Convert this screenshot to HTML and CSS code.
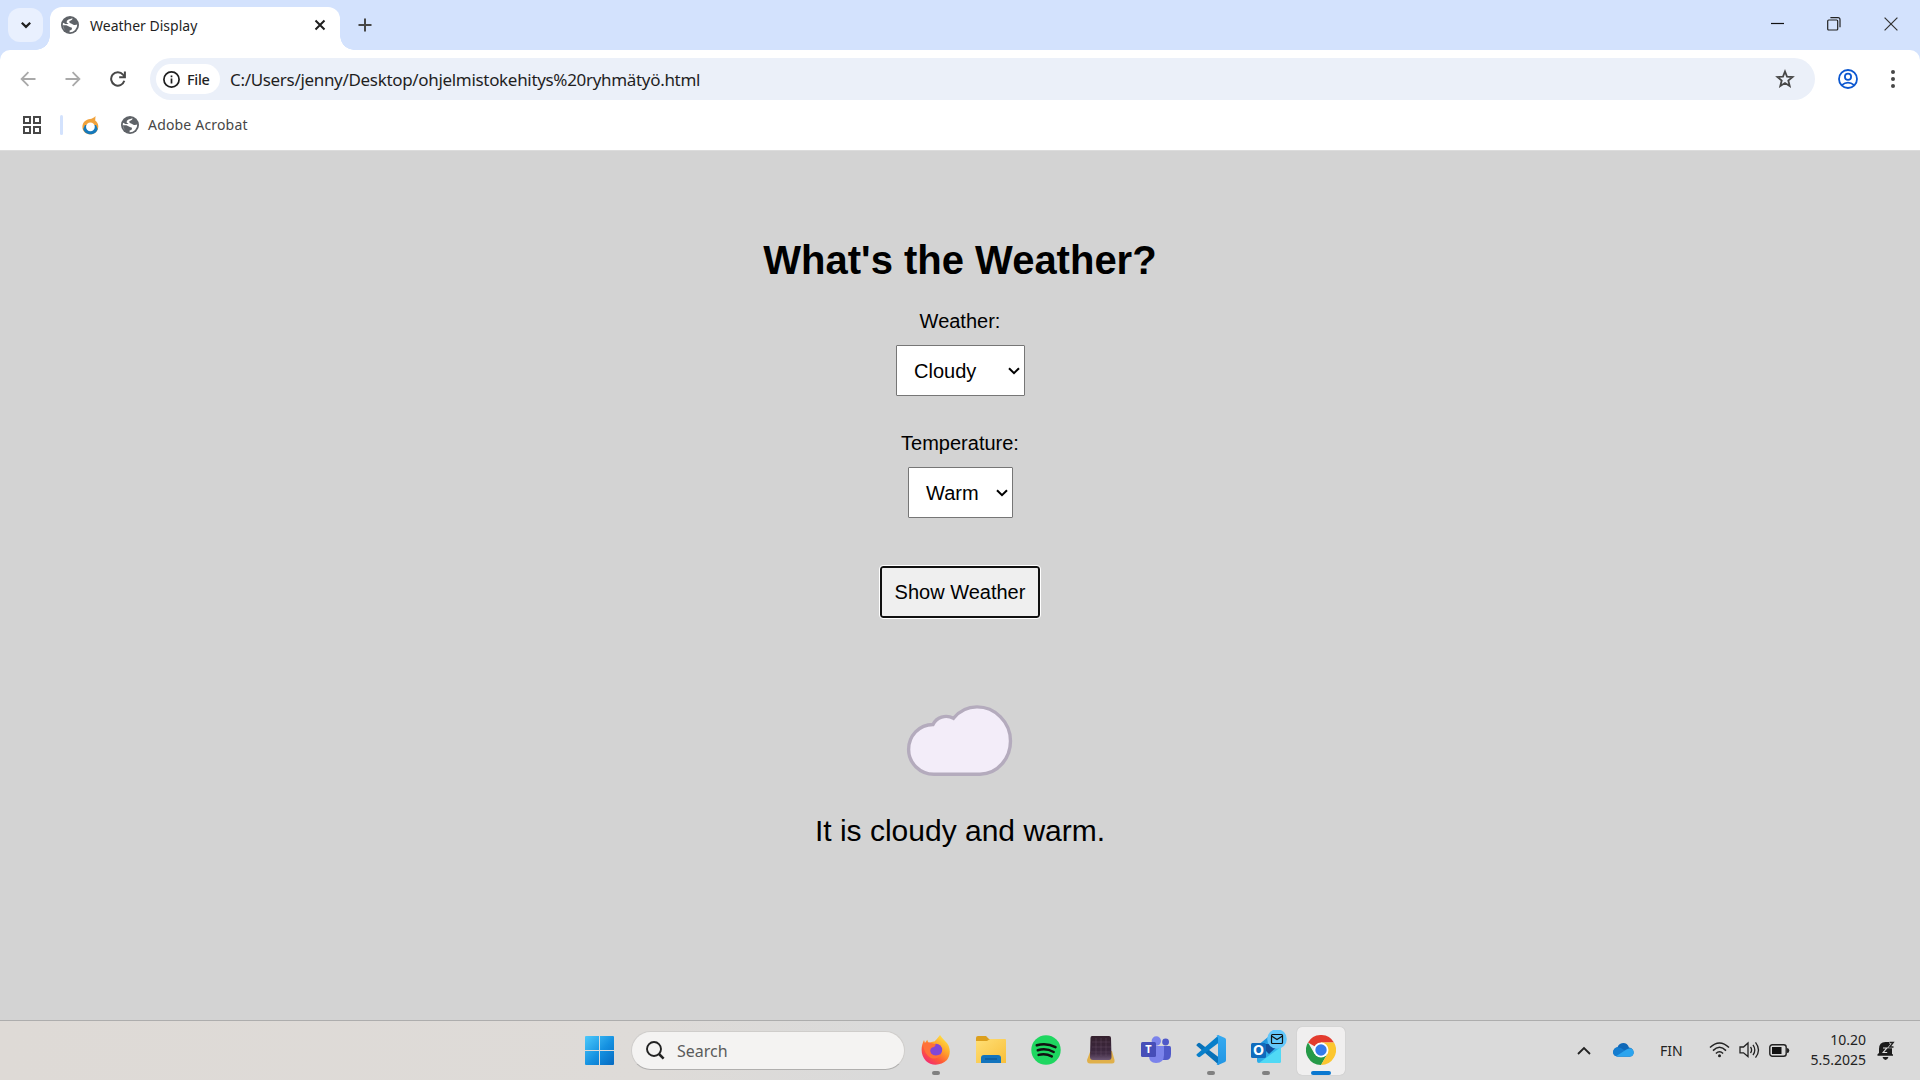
FILE: index.html
```html
<!DOCTYPE html>
<html lang="en">
<head>
<meta charset="utf-8">
<title>Weather Display</title>
<link rel="stylesheet" href="styles.css">
</head>
<body>
<svg width="0" height="0" class="defs" aria-hidden="true">
  <defs>
    <symbol id="globe" viewBox="0 0 18 18">
      <circle cx="9" cy="9" r="9" fill="#5f6368"/>
      <path d="M11.6 2.2Q11.5 4 9.7 4.6L8.2 5.4Q8 6.6 9.4 7.2L11.2 8Q12.3 9.3 14 9L16.2 8.5A7.3 7.3 0 0 1 8.6 16.2V14.6Q11 14.2 11 12.4 11 11.3 9.4 11.2L5.4 9.2H1.8A7.3 7.3 0 0 0 4.2 14.4Q2.5 12.5 1.8 9 1.7 7.8 2.2 6.8L4.4 8H7.6L5.6 6.6Q5.3 4.4 7.5 3.6L11.6 2.2Z" fill="#fff"/>
    </symbol>
    <linearGradient id="win" x1="0" y1="0" x2="1" y2="1"><stop offset="0" stop-color="#4cc9fb"/><stop offset=".55" stop-color="#1490e0"/><stop offset="1" stop-color="#0669c0"/></linearGradient>
    <linearGradient id="fox" x1=".9" y1="0" x2=".2" y2="1"><stop offset="0" stop-color="#fff14a"/><stop offset=".4" stop-color="#ffa62b"/><stop offset=".7" stop-color="#ff5a36"/><stop offset="1" stop-color="#f0247c"/></linearGradient>
    <linearGradient id="folder" x1="0" y1="0" x2="1" y2="1"><stop offset="0" stop-color="#ffdf76"/><stop offset="1" stop-color="#f8bf3a"/></linearGradient>
    <linearGradient id="keys" x1="0" y1="0" x2="0" y2="1"><stop offset="0" stop-color="#34202d"/><stop offset=".7" stop-color="#3d2840"/><stop offset="1" stop-color="#6d5774"/></linearGradient>
    <linearGradient id="code" x1="0" y1="0" x2="0" y2="1"><stop offset="0" stop-color="#36aaf0"/><stop offset="1" stop-color="#2196e4"/></linearGradient>
    <linearGradient id="mail" x1="0" y1="0" x2="1" y2="1"><stop offset="0" stop-color="#1784d8"/><stop offset="1" stop-color="#43d3f5"/></linearGradient>
  </defs>
</svg>

<header class="browser">
  <div class="tabstrip">
    <div class="tab-search"><svg width="12" height="8" viewBox="0 0 12 8"><path d="M1.8 1.7 6 5.9 10.2 1.7" fill="none" stroke="#1f1f1f" stroke-width="2.2"/></svg></div>
    <div class="tab">
      <svg class="tab-globe" width="18" height="18"><use href="#globe"/></svg>
      <span class="tab-title">Weather Display</span>
      <svg class="tab-close" width="12" height="12" viewBox="0 0 12 12"><path d="M1.5 1.5 10.5 10.5M10.5 1.5 1.5 10.5" stroke="#1f1f1f" stroke-width="2"/></svg>
    </div>
    <svg class="tab-new" width="14" height="14" viewBox="0 0 14 14"><path d="M7 .5V13.5M.5 7H13.5" stroke="#474747" stroke-width="2"/></svg>
    <div class="window-buttons">
      <svg width="14" height="14" viewBox="0 0 14 14"><path d="M1 6.5H14" stroke="#111" stroke-width="1.2"/></svg>
      <svg width="14" height="14" viewBox="0 0 14 14"><rect x=".7" y="3" width="10" height="10" rx="1" fill="none" stroke="#222" stroke-width="1.2"/><path d="M3.4.7H11Q13 .7 13 2.7V10.2" fill="none" stroke="#222" stroke-width="1.2"/></svg>
      <svg width="14" height="14" viewBox="0 0 14 14"><path d="M.6.6 13.4 13.4M13.4.6.6 13.4" stroke="#333" stroke-width="1.2"/></svg>
    </div>
  </div>

  <div class="toolbar">
    <nav class="nav-buttons">
      <svg width="16" height="16" viewBox="0 0 16 16"><path d="M15.5 8H1.8M8.4 1.2 1.6 8 8.4 14.8" fill="none" stroke="#a9a9a9" stroke-width="1.8"/></svg>
      <svg width="16" height="16" viewBox="0 0 16 16"><path d="M.5 8H14.2M7.6 1.2 14.4 8 7.6 14.8" fill="none" stroke="#a9a9a9" stroke-width="1.8"/></svg>
      <svg width="16" height="16" viewBox="0 0 16 16"><path d="M14.3 9.8A6.7 6.7 0 1 1 13 3.6L14.8 5.5M14.9.5V6.2H9.2" fill="none" stroke="#474747" stroke-width="2"/></svg>
    </nav>
    <div class="omnibox">
      <div class="chip">
        <svg width="17" height="17" viewBox="0 0 17 17"><circle cx="8.5" cy="8.5" r="7.6" fill="none" stroke="#1f1f1f" stroke-width="1.7"/><path d="M8.5 7.6V12.4M8.5 4.5V6.2" stroke="#1f1f1f" stroke-width="1.7"/></svg>
        <span class="chip-text">File</span>
      </div>
      <span class="url">C:/Users/jenny/Desktop/ohjelmistokehitys%20ryhmätyö.html</span>
      <svg class="star" width="20" height="20" viewBox="0 0 20 20"><path d="M10 2.5 12 7.6 17.6 8 13.3 11.6 14.7 17 10 14.1 5.3 17 6.7 11.6 2.4 8 8 7.6Z" fill="none" stroke="#474747" stroke-width="1.8"/></svg>
    </div>
    <svg class="profile" width="20" height="20" viewBox="0 0 20 20" fill="none" stroke="#0b57d0" stroke-width="1.8"><circle cx="10" cy="10" r="9"/><circle cx="10" cy="7.8" r="3.1"/><path d="M3.8 16.1Q10 11.3 16.2 16.1"/></svg>
    <svg class="menu" width="4" height="18" viewBox="0 0 4 18" fill="#474747"><circle cx="2" cy="2" r="2"/><circle cx="2" cy="9" r="2"/><circle cx="2" cy="16" r="2"/></svg>
  </div>

  <div class="bookmarks">
    <svg width="18" height="18" viewBox="0 0 18 18" fill="none" stroke="#474747" stroke-width="2"><path d="M1 1H7V7H1ZM11 1H17V7H11ZM1 11H7V17H1ZM11 11H17V17H11Z"/></svg>
    <span class="divider"></span>
    <svg class="drop" width="17" height="19" viewBox="0 0 17 19"><path d="M13.5 0 13.2 4.5C18 8 17 15 12 17.5 7 20 0 17 .4 10.5.6 6 4 3.5 8 3 10 2.8 12 1.8 13.5 0Z" fill="#f0a23c"/><path d="M1.2 13C3 20 14 20 15.7 13L14 9 3 9Z" fill="#1579bb"/><circle cx="8.4" cy="10.8" r="4.4" fill="#fff"/></svg>
    <svg class="bm-globe" width="18" height="18"><use href="#globe"/></svg>
    <span class="bm-text">Adobe Acrobat</span>
  </div>
</header>

<main class="page">
  <h1 class="title">What's the Weather?</h1>
  <div class="label">Weather:</div>
  <div class="select weather" role="combobox">Cloudy<svg width="12" height="8" viewBox="0 0 12 8"><path d="M1 1.2 6 6.2 11 1.2" fill="none" stroke="#000" stroke-width="2"/></svg></div>
  <div class="label second">Temperature:</div>
  <div class="select temperature" role="combobox">Warm<svg width="12" height="8" viewBox="0 0 12 8"><path d="M1 1.2 6 6.2 11 1.2" fill="none" stroke="#000" stroke-width="2"/></svg></div>
  <button class="show">Show Weather</button>
  <svg class="cloud" width="120" height="80" viewBox="0 0 120 80"><path d="M33 24.5C19 24.5 8.6 36 8.6 49.5S20 74.2 34 74.2H80C98 74.2 110.5 58 110.5 41 110.5 22 95 6.9 77 6.9 67 6.9 59 11.5 53.5 18.3 45.5 14 36.5 17.5 33 24.5Z" fill="#f3edf9" stroke="#b4abbd" stroke-width="3.4"/></svg>
  <p class="result">It is cloudy and warm.</p>
</main>

<footer class="taskbar">
  <svg class="start" width="29" height="29" viewBox="0 0 29 29" fill="url(#win)"><path d="M1 0H14V14H0V1Q0 0 1 0ZM15 0H28Q29 0 29 1V14H15ZM0 15H14V29H1Q0 29 0 28ZM15 15H29V28Q29 29 28 29H15Z"/></svg>
  <div class="search">
    <svg width="19" height="19" viewBox="0 0 19 19"><circle cx="8" cy="8" r="7" fill="none" stroke="#222" stroke-width="1.9"/><path d="M13 13 17.6 17.6" stroke="#222" stroke-width="2.5"/></svg>
    <span class="search-text">Search</span>
  </div>
  <div class="apps">
    <div class="app running">
      <svg width="30" height="30" viewBox="0 0 30 30"><path d="M19 0Q21 3 24 6C30 11 30 20 26 25 20 31 10 31 5 26-1 20 0 11 3 5L4 8 6.2 4.8 7.5 8Q12 6 13.5 6.5 16 4 19 0Z" fill="url(#fox)"/><circle cx="15" cy="15" r="6.2" fill="#8147d8"/><path d="M2 9Q6 6 10 8L15 9.5Q14 12 11 12.6 8 15 10 18.5 14 22 20 19 17 25 10 23 3 19 2 9Z" fill="#ff7139"/></svg>
    </div>
    <div class="app">
      <svg width="30" height="30" viewBox="0 0 30 30"><path d="M0 3Q0 1 2 1H10L13 4H22V10H0Z" fill="#dc9f1d"/><path d="M0 6H11L14 4H29Q30 4 30 5V28H0Z" fill="url(#folder)"/><path d="M5 28V23Q5 20 8 20H22Q25 20 25 23V28Z" fill="#1374bd"/><path d="M9 24H21" stroke="#0a4f8b"/></svg>
    </div>
    <div class="app">
      <svg width="30" height="30" viewBox="0 0 30 30"><circle cx="15" cy="15" r="14.7" fill="#1ed760"/><path d="M5.8 10.3Q15.5 7.4 24.5 12.2M6.8 15.3Q15 12.8 22.7 17M7.6 19.9Q14.5 18 20.8 21.4" fill="none" stroke="#111" stroke-width="2.5" stroke-linecap="round"/></svg>
    </div>
    <div class="app">
      <svg width="30" height="30" viewBox="0 0 30 30"><path d="M4 17 1 25Q1 28.5 4 28.5H26Q29 28.5 28.5 25L26 16Z" fill="#e0b04a"/><path d="M6 1H23Q25 1 25 3L25.5 22Q25.5 25 23 25H7Q4 25 4 22L4.5 3Q4.5 1 6 1Z" fill="url(#keys)"/><path d="M6 7H24M6 12H25M5 17H25M10 3V21M15 3V21M20 3V21" stroke="#715a70" stroke-opacity=".35"/></svg>
    </div>
    <div class="app">
      <svg width="30" height="30" viewBox="0 0 30 30"><circle cx="24.6" cy="7" r="3.4" fill="#5059c9"/><path d="M20 11H28.5Q30 11 30 13V19Q30 25 25 25H20Z" fill="#5059c9"/><circle cx="15.3" cy="6" r="4.7" fill="#7b83eb"/><path d="M8 11H22.5Q23 11 23 12V20Q23 28 15 28 8 28 8 21Z" fill="#7b83eb"/><rect y="7" width="15" height="15" rx="1.5" fill="#464eb8"/><text x="7.5" y="18.3" class="badge-letter" font-size="11">T</text></svg>
    </div>
    <div class="app running">
      <svg width="30" height="30" viewBox="0 0 30 30"><path d="M2 8.2Q3 7.3 4.2 8.2L23 22.5V30L.7 10.8Q0 10 .7 9.4Z" fill="#0871b8"/><path d="M2 21.8Q3 22.7 4.2 21.8L23 7.5V0L.7 19.2Q0 20 .7 20.6Z" fill="#087fca"/><path d="M22.2 0 29 3Q30 3.5 30 4.7V25.3Q30 26.5 29 27L22.2 30Q21 30 20.6 29.3L22 27V3L20.6.7Q21 0 22.2 0Z" fill="url(#code)"/></svg>
    </div>
    <div class="app running">
      <svg width="38" height="36" viewBox="0 0 38 36" class="outlook"><path d="M6 16 17 7 30 14V31Q30 33 28 33H8Q6 33 6 31Z" fill="url(#mail)"/><path d="M8 14H29L18 24Z" fill="#124f9c"/><path d="M8 33 30 17V31Q30 33 28 33Z" fill="#50d9f5"/><rect y="13" width="15" height="15" rx="1.5" fill="#0f6cbd"/><text x="7.5" y="25.3" class="badge-letter" font-size="14">O</text><circle cx="26" cy="9" r="9.8" fill="#63c7fa"/><rect x="20.5" y="4.5" width="11" height="9" rx="1" fill="none" stroke="#111" stroke-width="1.2"/><path d="M20.5 6 26 9.5 31.5 6" fill="none" stroke="#111" stroke-width="1.2"/></svg>
    </div>
    <div class="app active">
      <svg width="30" height="30" viewBox="0 0 30 30"><path d="M15 15 2 7.5A15 15 0 0 1 28 7.5L15 7.5Z" fill="#e33b2e"/><path d="M2 7.5A15 15 0 0 0 15 30L21.5 18.75 8.5 18.75Z" fill="#269a48"/><path d="M15 7.5H28A15 15 0 0 1 15 30L21.5 18.75Z" fill="#fcc62f"/><circle cx="15" cy="15" r="7.5" fill="#fff"/><circle cx="15" cy="15" r="5.7" fill="#347bea"/></svg>
    </div>
  </div>
  <div class="tray">
    <svg class="up" width="14" height="9" viewBox="0 0 14 9"><path d="M1 8 7 2 13 8" fill="none" stroke="#222" stroke-width="1.8"/></svg>
    <svg class="drive" width="21" height="14" viewBox="0 0 21 14"><path d="M4.5 4.2C6.5-.8 14-1.8 16 4.6 22 5 22 13.4 17 13.6H4.5C-1 13.5-1.5 5.2 4.5 4.2Z" fill="#0f68b8"/><path d="M0 9Q1 4 5 4.2 8 4.2 11 7L19 11 17 13.6H4.5Q0 13 0 9Z" fill="#147ccf"/><path d="M3 13.2 13 6.7Q15 5 18 5.2 21 7 20.7 10 20 13.6 17 13.6H5Z" fill="#2ba4ee"/></svg>
    <span class="lang">FIN</span>
    <svg class="wifi" width="21" height="16" viewBox="0 0 21 16" fill="none" stroke="#222" stroke-width="1.5"><path d="M1 5.5Q10.5-3.5 20 5.5M4 8.6Q10.5 2 17 8.6M6.9 11.5Q10.5 8 14.1 11.5"/><circle cx="10.5" cy="13.7" r="1.5" fill="#222" stroke="none"/></svg>
    <svg class="sound" width="21" height="18" viewBox="0 0 21 18" fill="none" stroke="#222" stroke-width="1.3"><path d="M1 6H4.5L9 2V15.5L4.5 11.8H1ZM11.5 6Q13.7 9 11.5 12M14 3.8Q17.6 9 14 14.2M16.5 1.4Q22.5 9 16.5 16.6"/></svg>
    <svg class="battery" width="21" height="13" viewBox="0 0 21 13"><rect x=".8" y=".8" width="16.4" height="11.4" rx="2.5" fill="none" stroke="#222" stroke-width="1.4"/><rect x="3" y="3" width="9.5" height="7" fill="#111"/><path d="M18 4Q20.3 4 20.3 6.5T18 9Z" fill="#222"/></svg>
    <div class="clock"><span class="time">10.20</span><span class="date">5.5.2025</span></div>
    <svg class="bell" width="18" height="19" viewBox="0 0 18 19"><path d="M2 8Q2 1 8.5 1H12L15 7V13L16 13.5V14.8H.5V13.2L2 12ZM5.5 16H11.5Q10.5 19 8.5 19T5.5 16Z" fill="#1b1b1b"/><path d="M6 7H9.8L6.2 11.5H10.2" fill="none" stroke="#ddd" stroke-width="1.2"/><path d="M12.5 1.5H16.2L12.7 6H16.5" fill="none" stroke="#dadada" stroke-width="2.6"/><path d="M12.5 1.5H16.2L12.7 6H16.5" fill="none" stroke="#222" stroke-width="1.4"/></svg>
  </div>
</footer>
</body>
</html>
```
FILE: styles.css
```css
* { box-sizing: border-box; }
body {
  margin: 0;
  width: 1920px;
  height: 1080px;
  overflow: hidden;
  display: flex;
  flex-direction: column;
  background: #d3d3d3;
  font-family: "Noto Sans", sans-serif;
}
svg { display: block; flex: none; }
.defs { position: absolute; }

/* Browser frame */
.browser { height: 151px; flex: none; background: #fff; border-bottom: 1px solid #dcdcdc; }
.tabstrip { height: 60px; margin-bottom: -10px; padding: 7px 22px 10px 8px; display: flex; background: #d3e2fd; }
.tab-search { width: 35px; height: 34px; margin: 1px 7px 0 0; border-radius: 12px; background: #e9f0fe; display: flex; align-items: center; justify-content: center; }
.tab { position: relative; width: 290px; height: 43px; padding: 0 14px 7px 11px; display: flex; align-items: center; background: #fff; border-radius: 12px 12px 0 0; }
.tab::before, .tab::after { content: ""; position: absolute; bottom: 0; width: 14px; height: 14px; }
.tab::before { left: -14px; background: radial-gradient(circle at 0 0, transparent 13.5px, #fff 14px); }
.tab::after { right: -14px; background: radial-gradient(circle at 100% 0, transparent 13.5px, #fff 14px); }
.tab-title { margin-left: 11px; font-size: 14px; color: #1f1f1f; white-space: nowrap; }
.tab-close { margin-left: auto; }
.tab-new { margin: 11px 0 0 18px; }
.window-buttons { margin: 10px 0 0 auto; display: flex; gap: 43px; }
.toolbar { position: relative; height: 58px; padding: 8px 25px 8px 20px; display: flex; align-items: center; background: #fff; border-radius: 10px 10px 0 0; }
.nav-buttons { width: 130px; display: flex; gap: 29px; }
.omnibox { width: 1665px; height: 42px; padding: 0 20px 0 6px; display: flex; align-items: center; border-radius: 21px; background: #ebf0f9; }
.chip { width: 64px; height: 30px; padding-left: 7px; display: flex; align-items: center; gap: 7px; border-radius: 15px; background: #fff; }
.chip-text { padding-bottom: 1px; font-size: 14.5px; font-weight: 500; letter-spacing: -.3px; color: #1f1f1f; }
.url { margin-left: 10px; font-size: 17px; letter-spacing: -.32px; color: #1f1f1f; white-space: nowrap; }
.star { margin-left: auto; }
.profile { margin-left: 23px; }
.menu { margin-left: auto; }
.bookmarks { height: 34px; padding-left: 23px; display: flex; align-items: center; }
.divider { width: 3px; height: 20px; margin: 0 19px; background: #d3e2fd; border-radius: 2px; }
.bm-globe { margin-left: 22px; }
.bm-text { margin-left: 9px; padding-bottom: 2px; font-size: 14px; letter-spacing: .18px; color: #474747; }

/* Weather page */
.page { height: 869px; flex: none; display: flex; flex-direction: column; align-items: center; font-family: "Liberation Sans", Arial, sans-serif; font-size: 20px; color: #000; }
.title { margin: 86px 0 0; font-size: 40px; line-height: 46px; }
.label { margin-top: 27px; line-height: 23px; }
.label.second { margin-top: 36px; }
.select { height: 51px; margin-top: 12px; padding: 1px 4px 0 17.5px; display: flex; align-items: center; justify-content: space-between; border: 1px solid #767676; border-radius: 1px; background: #fff; }
.weather { width: 129px; }
.temperature { width: 105px; }
.show { width: 160px; height: 52px; margin-top: 48px; padding: 0; border: 2px solid #101010; border-radius: 3px; outline: 1px solid #fff; background: #efefef; font: inherit; color: #000; }
.cloud { margin-top: 82px; }
.result { margin: 34px 0 0; font-size: 30px; line-height: 34px; }

/* Taskbar */
.taskbar { height: 60px; flex: none; display: flex; align-items: center; border-top: 1px solid #adadad; background: linear-gradient(90deg, #dedad6 0, #dedbd8 34%, #dadada 46%, #dadada 100%); }
.start { margin-left: 585px; }
.search { width: 274px; height: 39px; margin-left: 17px; padding-left: 14px; display: flex; align-items: center; border: 1px solid #cfcdcb; border-bottom-color: #b0afae; border-radius: 20px; background: #f4f3f2; }
.search-text { margin-left: 12px; font-size: 16px; color: #5b5b5b; }
.apps { margin-left: 7px; display: flex; gap: 7px; }
.app { position: relative; width: 48px; height: 48px; display: flex; align-items: center; justify-content: center; border-radius: 5px; }
.app > svg { margin-top: -1px; }
.active { background: #f0efef; box-shadow: 0 0 1px #aaa; }
.running::after, .active::after { content: ""; position: absolute; bottom: 0; left: 20px; width: 8px; height: 4px; border-radius: 2px; background: #808080; }
.active::after { left: 14px; width: 20px; background: #0a78d0; }
.app > .outlook { margin: -6px -4px 0 4px; }
.badge-letter { font-family: "Noto Sans", sans-serif; font-weight: 700; fill: #fff; text-anchor: middle; }
.tray { margin-left: auto; padding: 0 25px 1px 0; display: flex; align-items: center; color: #222; }
.drive { margin-left: 22px; }
.lang { width: 22px; margin: 0 1px 0 26px; font-size: 14px; white-space: nowrap; }
.wifi { margin-left: 26px; }
.sound { margin-left: 9px; }
.battery { margin-left: 9px; }
.clock { width: 62px; margin-left: 14px; display: flex; flex-direction: column; align-items: flex-end; font-size: 14px; line-height: 20px; white-space: nowrap; }
.bell { margin-left: 11px; }
```
